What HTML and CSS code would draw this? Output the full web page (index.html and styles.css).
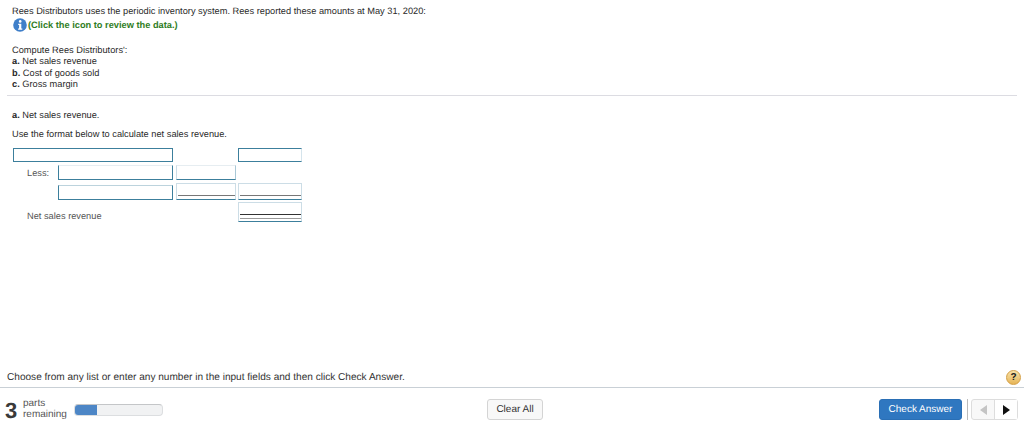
FILE: index.html
```html
<!DOCTYPE html>
<html lang="en">
<head>
    <meta charset="UTF-8">
    <title>Question</title>
    <link rel="stylesheet" href="styles.css">
</head>
<body>

<div class="page">
    <div class="question">
        <p class="line">Rees Distributors uses the periodic inventory system. Rees reported these amounts at May 31, 2020:</p>
        <p class="data-link">
            <svg class="info-icon" viewBox="0 0 14 14" width="14" height="14">
                <circle cx="7" cy="7" r="6.8" fill="#3f7fc9"/>
                <circle cx="7.2" cy="3.4" r="1.3" fill="#fff"/>
                <path d="M5.2 5.7h3.1v4.9h1v1.2H5.1v-1.2h1V6.9h-.9z" fill="#fff"/>
            </svg>
            <span>(Click the icon to review the data.)</span>
        </p>
        <div class="tasks">
            <p class="task">Compute Rees Distributors':</p>
            <p class="task"><b>a.</b> Net sales revenue</p>
            <p class="task"><b>b.</b> Cost of goods sold</p>
            <p class="task"><b>c.</b> Gross margin</p>
        </div>
    </div>

    <div class="part">
        <p class="part-title"><b>a.</b> Net sales revenue.</p>
        <p class="part-note">Use the format below to calculate net sales revenue.</p>

        <div class="sheet">
            <div class="cell wide row-1"></div>
            <div class="cell col-4 row-1"></div>

            <div class="label row-2">Less:</div>
            <div class="cell col-2 row-2"></div>
            <div class="cell col-3 row-2 soft"></div>

            <div class="cell col-2 row-3"></div>
            <div class="cell col-3 row-3 soft single"></div>
            <div class="cell col-4 row-3 soft single"></div>

            <div class="label total row-4">Net sales revenue</div>
            <div class="cell col-4 row-4 soft double"></div>
        </div>
    </div>

    <div class="hint-bar">
        <span>Choose from any list or enter any number in the input fields and then click Check Answer.</span>
        <span class="help">?</span>
    </div>

    <div class="footer">
        <div class="parts">
            <span class="parts-num">3</span>
            <span class="parts-text">parts<br>remaining</span>
            <div class="progress"><div class="progress-fill"></div></div>
        </div>
        <button class="btn">Clear All</button>
        <div class="actions">
            <button class="btn btn-primary">Check Answer</button>
            <span class="divider"></span>
            <div class="pager">
                <span class="pager-btn"><span class="arrow-left"></span></span>
                <span class="pager-btn"><span class="arrow-right"></span></span>
            </div>
        </div>
    </div>
</div>

</body>
</html>
```

FILE: styles.css
```css
* {
    margin: 0;
    padding: 0;
    box-sizing: border-box;
}

body {
    background-color: #fff;
    font-family: "Liberation Sans", Arial, sans-serif;
    font-size: 9.25px;
    color: #2a2a2a;
    text-rendering: geometricPrecision;
}

.page {
    width: 1024px;
    height: 431px;
    display: flex;
    flex-direction: column;
}

/*top part*/
.question {
    margin: 0 7px;
    padding: 5px 0 5px 5px;
    height: 96px;
    border-bottom: 1px solid #dcdce2;
}

.line {
    line-height: 12px;
}

.data-link {
    display: flex;
    align-items: center;
    gap: 1px;
    height: 15px;
    font-weight: bold;
    color: #2f7d1e;
}

.info-icon {
    flex: none;
    margin-left: 1px;
}

.tasks {
    margin-top: 12.5px;
}

.task {
    line-height: 11.6px;
}

.part {
    padding: 13px 0 0 12px;
    height: 260px;
}

.part-title {
    line-height: 12px;
}

.part-note {
    margin-top: 7px;
    line-height: 12px;
}

/*the worksheet*/
.sheet {
    margin: 8px 0 0 1px;
    display: grid;
    grid-template-columns: 45px 115px 63px 66px;
    grid-template-rows: 14px 15px 17px 19px;
    row-gap: 3px;
    width: 289px;
}

.cell {
    border: 1px solid #3c7f9c;
    border-right-color: #d5e4ec;
    position: relative;
}

.wide {
    grid-column: 1 / 3;
    border-right-color: #3c7f9c;
}

.col-2 {
    grid-column: 2;
    border-right-color: #3c7f9c;
    border-top-color: #bcd3dd;
}

.col-2.row-2 {
    border-top-color: #e6edf1;
}

.col-2.row-3 {
    margin-top: 2px;
}

.col-3 {
    grid-column: 3;
    margin-left: 3px;
}

.col-4 {
    grid-column: 4;
    margin-left: 2px;
}

.row-1 { grid-row: 1; }
.row-2 { grid-row: 2; }
.row-3 { grid-row: 3; }
.row-4 { grid-row: 4; margin-top: -1px; }

.soft {
    border-color: #ccdde6;
    border-bottom-color: #3c7f9c;
}

.row-2.soft {
    border-top-color: #e6edf1;
    border-right-color: #a9c8d6;
}

.single::after {
    content: "";
    position: absolute;
    left: 1px;
    right: 0;
    bottom: 3px;
    border-bottom: 1px solid #777;
}

.double::after {
    content: "";
    position: absolute;
    left: 1px;
    right: 0;
    bottom: 2px;
    height: 3px;
    border-top: 1px solid #333;
    border-bottom: 1px solid #999;
}

.label {
    grid-column: 1 / 3;
    padding-left: 14px;
    color: #555;
    display: flex;
    align-items: center;
}

.total {
    align-items: flex-end;
    padding-bottom: 1px;
}

/*bottom bars*/
.hint-bar {
    height: 32px;
    padding: 12px 3px 0 7px;
    display: flex;
    align-items: center;
    justify-content: space-between;
    font-size: 10.08px;
    color: #333;
    border-bottom: 1px solid #c9d0d6;
}

.help {
    width: 15px;
    height: 15px;
    border-radius: 50%;
    background: linear-gradient(#f8e2a8, #e6b558);
    border: 1px solid #d49f45;
    font-size: 10px;
    font-weight: bold;
    color: #222;
    text-align: center;
    line-height: 13px;
}

.footer {
    flex: 1;
    padding: 11px 6px 0 5px;
    display: grid;
    grid-template-columns: 482px 56px 1fr;
    align-items: start;
}

.parts {
    display: flex;
    align-items: center;
    height: 21px;
}

.parts-num {
    width: 12px;
    padding-top: 2px;
    font-size: 22px;
    font-weight: bold;
    color: #3a3a3a;
    line-height: 20px;
}

.parts-text {
    margin-left: 6px;
    font-size: 10px;
    line-height: 10.5px;
    color: #555;
}

.progress {
    width: 89px;
    height: 12px;
    margin-left: 7px;
    background-color: #f1f2f3;
    border: 1px solid #dcdee0;
    border-top-color: #c4c6c8;
    border-radius: 4px;
    overflow: hidden;
}

.progress-fill {
    width: 22px;
    height: 100%;
    background-color: #4d86c6;
}

.btn {
    width: 56px;
    height: 21px;
    font-family: inherit;
    font-size: 10px;
    color: #333;
    background-color: #f8f8f8;
    border: 1px solid #d4d4d4;
    border-radius: 3px;
    text-rendering: geometricPrecision;
}

.btn-primary {
    width: 83px;
    color: #fff;
    background-color: #2f77c0;
    border-color: #2a6fb5;
}

.actions {
    display: flex;
    align-items: center;
    justify-content: flex-end;
}

.divider {
    width: 1px;
    height: 21px;
    margin: 0 3px 0 5px;
    background-color: #bbb;
}

.pager {
    display: flex;
    height: 21px;
    width: 47px;
    border: 1px solid #ddd;
    border-radius: 3px;
    background-color: #f8f8f8;
}

.pager-btn {
    flex: 1;
    display: flex;
    align-items: center;
    justify-content: center;
}

.pager-btn + .pager-btn {
    background-color: #fff;
    border-left: 1px solid #ddd;
}

.arrow-left {
    border: 5px solid transparent;
    border-left: 0;
    border-right: 7px solid #c4c4c4;
}

.arrow-right {
    border: 5px solid transparent;
    border-right: 0;
    border-left: 7px solid #111;
}
```
